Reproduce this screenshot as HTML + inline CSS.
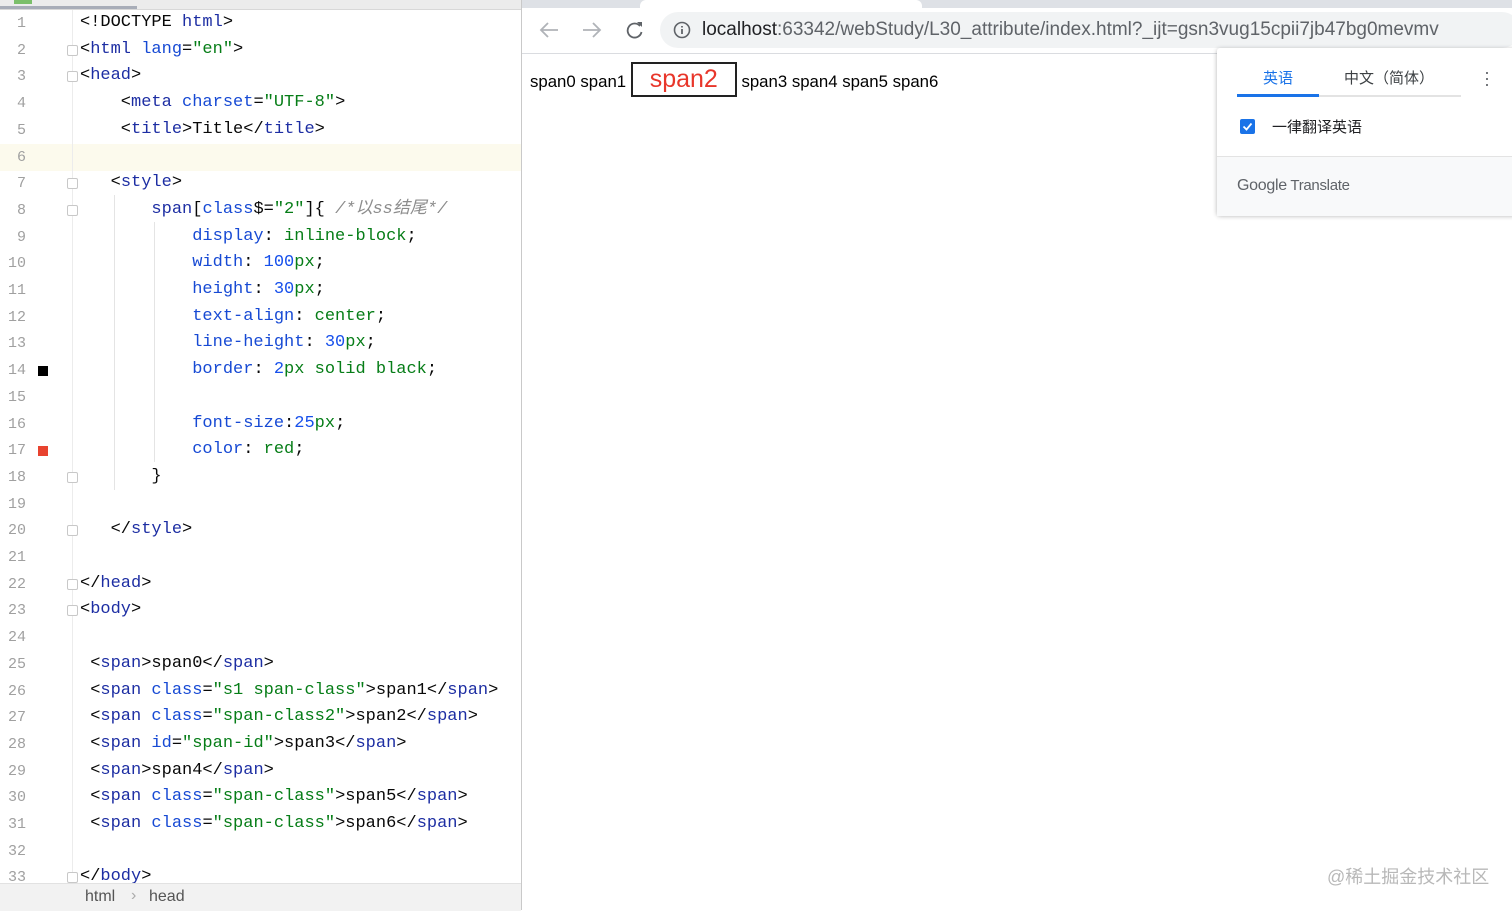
<!DOCTYPE html>
<html><head><meta charset="utf-8"><style>
body{margin:0;width:1512px;height:910px;position:relative;overflow:hidden;background:#fff;font-family:"Liberation Sans","Noto Sans CJK SC",sans-serif}
.ed{position:absolute;left:0;top:0;width:521px;height:910px;background:#fff}
.ln{position:absolute;left:0;width:26px;text-align:right;font:15px/20px "Liberation Mono",monospace;color:#a0a0a0}
.cl{position:absolute;left:80px;font:17px/20px "Liberation Mono","Noto Sans CJK SC",monospace;color:#080808;white-space:pre}
.t{color:#1d2ea3}.a{color:#174ad4}.s{color:#067d17}.n{color:#1750eb}.c{color:#8c8c8c;font-style:italic}
.fold{position:absolute;left:67px;width:9px;height:9px;border:1px solid #c8c8c8;border-radius:2px;background:#fff}
</style></head><body>
<div class="ed">
<div style="position:absolute;left:0;top:0;width:521px;height:9px;background:#ececec;border-bottom:1px solid #d8d8d8"></div>
<div style="position:absolute;left:0;top:6px;width:137px;height:3px;background:#a8adb8"></div>
<div style="position:absolute;left:14px;top:0;width:18px;height:4px;background:#7bbf6a"></div>
<div style="position:absolute;left:0;top:144px;width:521px;height:27px;background:#fcfaed"></div>
<div style="position:absolute;left:72px;top:10px;width:1px;height:873px;background:#ececec"></div>
<div style="position:absolute;left:114px;top:195px;width:1px;height:295px;background:#e4e4e4"></div>
<div style="position:absolute;left:154px;top:222px;width:1px;height:240px;background:#e4e4e4"></div>
<div id="code"></div>
<div style="position:absolute;left:38px;top:366px;width:10px;height:10px;background:#000"></div>
<div style="position:absolute;left:38px;top:446px;width:10px;height:10px;background:#e8432f"></div>
<div style="position:absolute;left:0;top:883px;width:521px;height:27px;background:#f2f2f2;border-top:1px solid #e2e2e2;font-size:16px;color:#555"><span style="position:absolute;left:85px;top:4px">html</span><span style="position:absolute;left:131px;top:3px;color:#aaa">›</span><span style="position:absolute;left:149px;top:4px">head</span></div>
</div>
<div style="position:absolute;left:521px;top:0;width:1px;height:910px;background:#c9c9c9"></div>
<div style="position:absolute;left:522px;top:0;width:990px;height:8px;background:#dee1e6"></div>
<div style="position:absolute;left:640px;top:0;width:282px;height:8px;background:#fff;border-radius:6px 6px 0 0"></div>
<div style="position:absolute;left:522px;top:8px;width:990px;height:45px;background:#fff;border-bottom:1px solid #dadce0"></div>
<svg style="position:absolute;left:538px;top:18px" width="110" height="24" viewBox="0 0 110 24"><g fill="none" stroke="#b0b3b8" stroke-width="1.8"><path d="M20 12H4M10 5L3 12l7 7"/><path d="M45 12h16M55 5l7 7-7 7"/></g><path d="M102 8a7 7 0 1 0 1.5 6" fill="none" stroke="#5f6368" stroke-width="1.8"/><path d="M99 4h5v5z" fill="#5f6368"/></svg>
<div style="position:absolute;left:660px;top:12px;width:860px;height:36px;background:#f1f3f4;border-radius:18px"></div>
<svg style="position:absolute;left:673px;top:21px" width="18" height="18" viewBox="0 0 18 18"><circle cx="9" cy="9" r="7.5" fill="none" stroke="#5f6368" stroke-width="1.6"/><path d="M9 8v5M9 5v1.5" stroke="#5f6368" stroke-width="1.8"/></svg>
<div style="position:absolute;left:702px;top:19px;font-size:19px;color:#5f6368;white-space:nowrap"><span style="color:#202124">localhost</span>:63342/webStudy/L30_attribute/index.html?_ijt=gsn3vug15cpii7jb47bg0mevmv</div>
<div style="position:absolute;left:530px;top:62px;font-size:16.8px;line-height:35px;color:#000;white-space:nowrap">span0 span1 <span style="display:inline-block;width:102px;height:31px;border:2px solid #222;text-align:center;line-height:31px;font-size:25px;color:#e8362a;vertical-align:baseline">span2</span> span3 span4 span5 span6</div>
<div style="position:absolute;left:1217px;top:48px;width:300px;height:167px;background:#fff;box-shadow:0 1px 5px rgba(0,0,0,.3);border-radius:3px">
<div style="position:absolute;left:46px;top:19px;font-size:15px;color:#1a73e8">英语</div>
<div style="position:absolute;left:127px;top:19px;font-size:15px;color:#3c4043">中文（简体）</div>
<div style="position:absolute;left:267px;top:21px;width:4px;font-size:18px;color:#5f6368;line-height:6px">·<br>·<br>·</div>
<div style="position:absolute;left:20px;top:47px;width:224px;height:2px;background:#e3e3e3"></div>
<div style="position:absolute;left:20px;top:46px;width:82px;height:3px;background:#1a73e8"></div>
<div style="position:absolute;left:23px;top:71px;width:15px;height:15px;background:#1a73e8;border-radius:2px"><svg width="15" height="15"><path d="M3.5 7.5l3 3 5-6" fill="none" stroke="#fff" stroke-width="1.8"/></svg></div>
<div style="position:absolute;left:55px;top:68px;font-size:15px;color:#202124">一律翻译英语</div>
<div style="position:absolute;left:0;top:108px;width:300px;height:59px;background:#f8f9fa;border-top:1px solid #e3e3e3"></div>
<div style="position:absolute;left:20px;top:129px;font-size:15px;color:#5f6368;letter-spacing:-.3px"><span style="font-size:16px">Google</span> Translate</div>
</div>
<div style="position:absolute;left:1327px;top:863px;font-size:18px;color:#b8b8b8">@稀土掘金技术社区</div>
<script>
const L=[
'&lt;!DOCTYPE <span class="t">html</span>&gt;',
'&lt;<span class="t">html</span> <span class="a">lang</span>=<span class="s">"en"</span>&gt;',
'&lt;<span class="t">head</span>&gt;',
'    &lt;<span class="t">meta</span> <span class="a">charset</span>=<span class="s">"UTF-8"</span>&gt;',
'    &lt;<span class="t">title</span>&gt;Title&lt;/<span class="t">title</span>&gt;',
'',
'   &lt;<span class="t">style</span>&gt;',
'       <span class="t">span</span>[<span class="a">class</span>$=<span class="s">"2"</span>]{ <span class="c">/*以ss结尾*/</span>',
'           <span class="a">display</span>: <span class="s">inline-block</span>;',
'           <span class="a">width</span>: <span class="n">100</span><span class="s">px</span>;',
'           <span class="a">height</span>: <span class="n">30</span><span class="s">px</span>;',
'           <span class="a">text-align</span>: <span class="s">center</span>;',
'           <span class="a">line-height</span>: <span class="n">30</span><span class="s">px</span>;',
'           <span class="a">border</span>: <span class="n">2</span><span class="s">px solid black</span>;',
'',
'           <span class="a">font-size</span>:<span class="n">25</span><span class="s">px</span>;',
'           <span class="a">color</span>: <span class="s">red</span>;',
'       }',
'',
'   &lt;/<span class="t">style</span>&gt;',
'',
'&lt;/<span class="t">head</span>&gt;',
'&lt;<span class="t">body</span>&gt;',
'',
' &lt;<span class="t">span</span>&gt;span0&lt;/<span class="t">span</span>&gt;',
' &lt;<span class="t">span</span> <span class="a">class</span>=<span class="s">"s1 span-class"</span>&gt;span1&lt;/<span class="t">span</span>&gt;',
' &lt;<span class="t">span</span> <span class="a">class</span>=<span class="s">"span-class2"</span>&gt;span2&lt;/<span class="t">span</span>&gt;',
' &lt;<span class="t">span</span> <span class="a">id</span>=<span class="s">"span-id"</span>&gt;span3&lt;/<span class="t">span</span>&gt;',
' &lt;<span class="t">span</span>&gt;span4&lt;/<span class="t">span</span>&gt;',
' &lt;<span class="t">span</span> <span class="a">class</span>=<span class="s">"span-class"</span>&gt;span5&lt;/<span class="t">span</span>&gt;',
' &lt;<span class="t">span</span> <span class="a">class</span>=<span class="s">"span-class"</span>&gt;span6&lt;/<span class="t">span</span>&gt;',
'',
'&lt;/<span class="t">body</span>&gt;'];
let h='';const folds=[2,3,7,8,18,20,22,23,33];
L.forEach((s,i)=>{const y=13+i*26.7;h+=`<div class="ln" style="top:${y+1}px">${i+1}</div><div class="cl" style="top:${y}px">${s}</div>`;if(folds.includes(i+1))h+=`<div class="fold" style="top:${y+5}px"></div>`;});
document.getElementById('code').innerHTML=h;
</script>
</body></html>
